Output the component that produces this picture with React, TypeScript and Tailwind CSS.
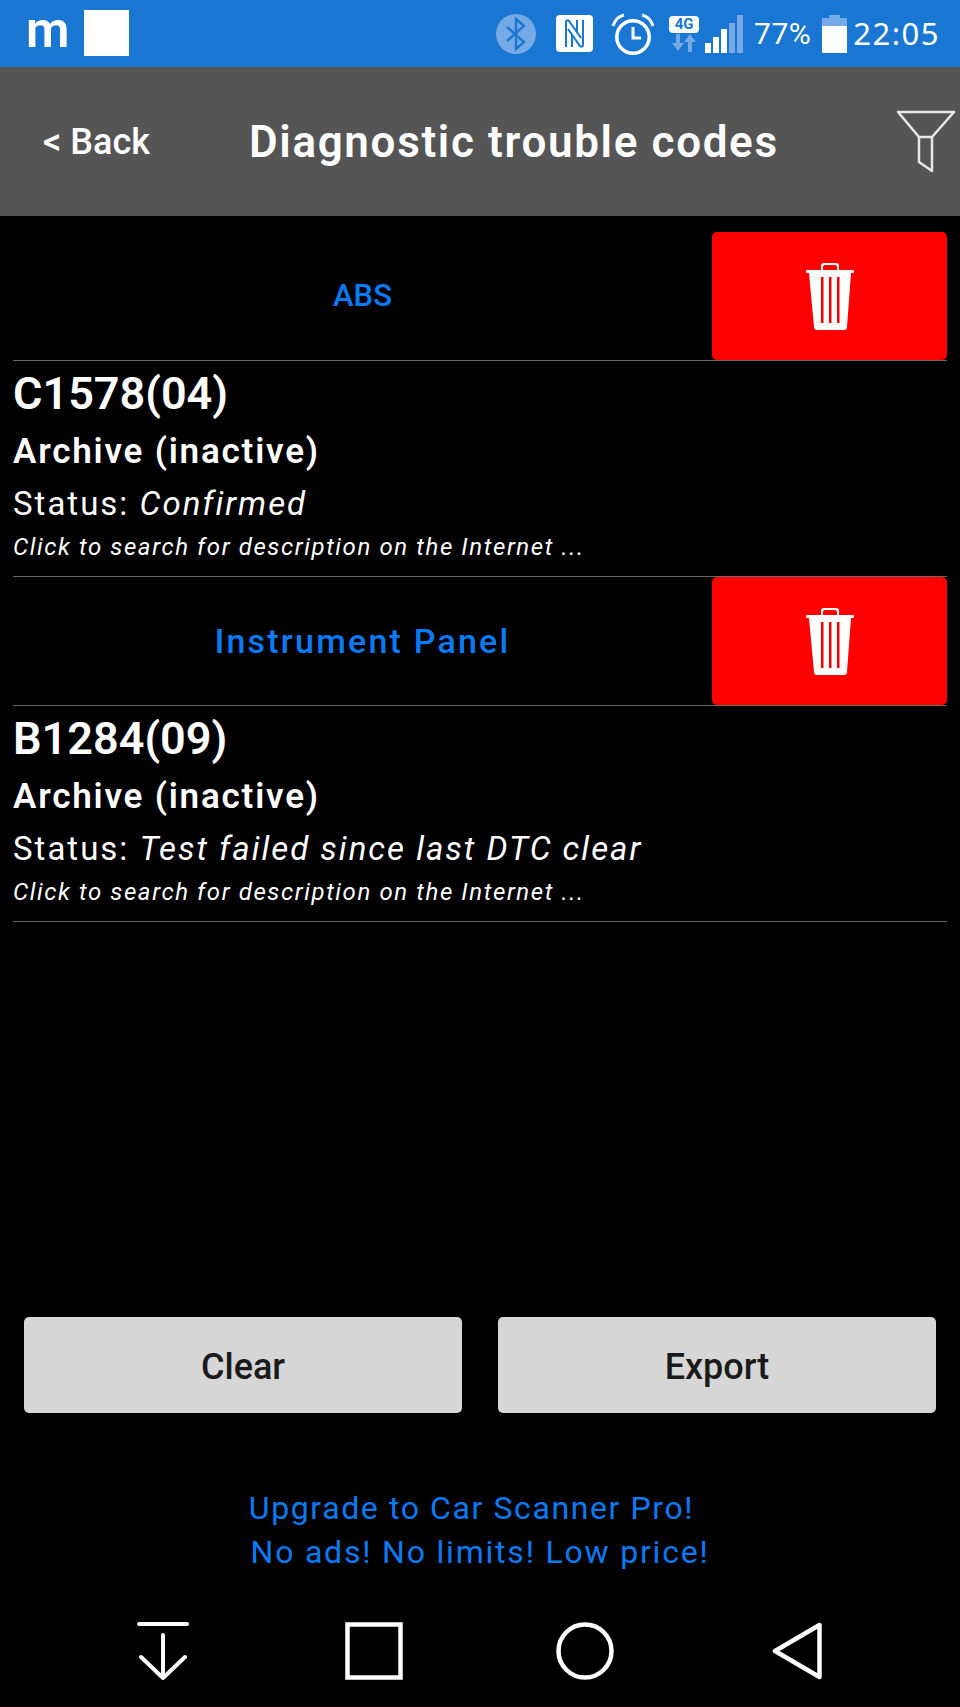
const display = "font-['Roboto',sans-serif]";

function Bluetooth() {
  return (
    <svg width="40" height="40" viewBox="0 0 40 40">
      <circle cx="20" cy="20" r="20" fill="#76aae6" />
      <path d="M11 13l17 15-8 7V5l8 7-17 15" fill="none" stroke="#1976d2" strokeWidth="2.4" />
    </svg>
  );
}

function Nfc() {
  return (
    <svg width="37" height="37" viewBox="0 0 37 37">
      <rect width="37" height="37" rx="4" fill="#fff" />
      <g fill="none" stroke="#1976d2" strokeWidth="2">
        <path d="M10 32V7c0-2 2-2 3-1l12 17" />
        <path d="M27 5v25c0 2-2 2-3 1L12 14" />
        <path d="M16 32V19M21 5v13" />
      </g>
    </svg>
  );
}

function Alarm() {
  return (
    <svg width="44" height="42" viewBox="0 0 44 42" fill="none" stroke="#fff">
      <circle cx="22" cy="24" r="16.2" strokeWidth="3.5" />
      <path d="M22 14v11h8" strokeWidth="3" />
      <path d="M2 13C4 7 8 3 13 2M42 13C40 7 36 3 31 2" strokeWidth="3" />
    </svg>
  );
}

function NetworkType() {
  return (
    <div className="flex flex-col items-center w-[30px] gap-px">
      <div className="w-[30px] h-[17px] bg-white rounded-sm flex items-center justify-center text-[15px] leading-none font-bold text-[#1976d2] font-['Roboto',sans-serif]">
        4G
      </div>
      <svg width="26" height="18" viewBox="0 0 26 18" fill="#76aae6">
        <path d="M5 0h4v9h4l-6 8-6-8h4zM21 18h-4V8h-4l6-8 6 8h-4z" />
      </svg>
    </div>
  );
}

function Signal() {
  return (
    <div className="flex items-end gap-[2px] h-[38px]">
      <div className="w-[6px] h-[10px] bg-white" />
      <div className="w-[6px] h-[16px] bg-white" />
      <div className="w-[6px] h-[24px] bg-white" />
      <div className="w-[6px] h-[30px] bg-[#76aae6]" />
      <div className="w-[6px] h-[38px] bg-[#76aae6]" />
    </div>
  );
}

function Battery() {
  return (
    <div className="flex flex-col items-center w-[25px]">
      <div className="w-[11px] h-[3px] bg-[#76aae6]" />
      <div className="w-[25px] h-[8px] bg-[#76aae6]" />
      <div className="w-[25px] h-[27px] bg-white" />
    </div>
  );
}

function Trash() {
  return (
    <svg width="48" height="67" viewBox="0 0 48 67" fill="#fff">
      <path d="M15 8V3c0-2 1-3 3-3h12c2 0 3 1 3 3v5h-2V4c0-1-1-2-2-2H19c-1 0-2 1-2 2v4z" />
      <rect x="0" y="7" width="48" height="3" rx="1" />
      <path
        d="M3 10h42l-4 54c0 2-1 3-3 3H11c-2 0-3-1-3-3zM15 14v46h2.5V14zM23 14v46h2.5V14zM31 14v46h2.5V14z"
        fillRule="evenodd"
      />
    </svg>
  );
}

function Filter() {
  return (
    <svg width="60" height="64" viewBox="0 0 60 64" fill="none" stroke="#e8e8e8" strokeWidth="2.5" strokeLinejoin="round">
      <path d="M2 2h56L36 27v34l-13-9V27z" />
      <path d="M23 27h13" />
    </svg>
  );
}

function SectionRow({ name, className }: { name: string; className: string }) {
  return (
    <div className="flex h-[129px] border-b border-[#6b6b6b]">
      <div className={`flex-1 flex items-center justify-center font-medium text-[#0a7bf5] ${display} ${className}`}>
        {name}
      </div>
      <button className="w-[235px] bg-[#ff0000] rounded-[5px] flex items-center justify-center">
        <Trash />
      </button>
    </div>
  );
}

function CodeRow({ code, status }: { code: string; status: string }) {
  return (
    <div className={`h-[216px] pt-[3px] border-b border-[#6b6b6b] text-white ${display}`}>
      <div className="text-[45px] leading-[60px] font-semibold">{code}</div>
      <div className="text-[35px] leading-[56px] font-semibold tracking-[1.8px]">Archive (inactive)</div>
      <div className="text-[33px] leading-[48px] tracking-[2px]">
        Status: <span className="italic">{status}</span>
      </div>
      <div className="text-[24px] leading-[38px] italic tracking-[1.6px]">Click to search for description on the Internet ...</div>
    </div>
  );
}

export default function App() {
  return (
    <div className="w-[960px] h-[1707px] bg-black flex flex-col overflow-hidden">
      {/* Status bar */}
      <div className="h-[67px] bg-[#1976d2] flex items-center pl-[26px] pr-[20px] text-white">
        <span className="text-[50px] leading-none font-semibold font-['Roboto',sans-serif] -mt-[8px]">m</span>
        <div className="w-[45px] h-[46px] bg-white ml-[15px] -mt-[1px]" />
        <div className="ml-auto flex items-center">
          <Bluetooth />
          <div className="ml-[20px]"><Nfc /></div>
          <div className="ml-[18px]"><Alarm /></div>
          <div className="ml-[14px]"><NetworkType /></div>
          <div className="ml-[6px]"><Signal /></div>
          <span className="ml-[11px] text-[30px] leading-none tracking-[0.5px] font-['Roboto',sans-serif]">77%</span>
          <div className="ml-[11px]"><Battery /></div>
          <span className="ml-[6px] text-[31px] leading-none tracking-[1.5px] font-['Noto_Sans',sans-serif]">22:05</span>
        </div>
      </div>

      {/* Header */}
      <div className="h-[149px] bg-[#555555] flex items-center text-white relative">
        <span className="ml-[43px] text-[36px] font-medium font-['Roboto',sans-serif]">&lt; Back</span>
        <span className={`absolute left-[249px] text-[44px] font-semibold tracking-[1.65px] ${display}`}>
          Diagnostic trouble codes
        </span>
        <div className="ml-auto mr-[4px]"><Filter /></div>
      </div>

      {/* Codes */}
      <div className="px-[13px] pt-[16px]">
        <SectionRow name="ABS" className="text-[31px]" />
        <CodeRow code="C1578(04)" status="Confirmed" />
        <SectionRow name="Instrument Panel" className="text-[34px] tracking-[2.2px]" />
        <CodeRow code="B1284(09)" status="Test failed since last DTC clear" />
      </div>

      {/* Bottom */}
      <div className="mt-auto">
        <div className="flex gap-[36px] px-[24px]">
          <button className="flex-1 h-[96px] pt-[3px] bg-[#d6d6d6] rounded-[5px] text-[36px] font-medium text-[#1a1a1a] font-['Roboto',sans-serif]">Clear</button>
          <button className="flex-1 h-[96px] pt-[3px] bg-[#d6d6d6] rounded-[5px] text-[36px] font-medium text-[#1a1a1a] font-['Roboto',sans-serif]">Export</button>
        </div>
        <div className={`mt-[73px] text-center text-[32px] leading-[44px] text-[#0a7bf5] ${display}`}>
          <div className="pr-[17px] tracking-[1.6px]">Upgrade to Car Scanner Pro!</div>
          <div className="tracking-[1.8px]">No ads! No limits! Low price!</div>
        </div>
        <div className="mt-[48px] h-[85px] flex items-start">
          <div className="ml-[137px]">
            <svg width="52" height="58" viewBox="0 0 52 58" fill="none" stroke="#fff" strokeLinecap="round" strokeLinejoin="round">
              <path d="M2 2h48" strokeWidth="4" />
              <path d="M26 13v43M4 35l22 21 22-21" strokeWidth="4" />
            </svg>
          </div>
          <div className="ml-[156px]">
            <svg width="58" height="58" viewBox="0 0 58 58" fill="none" stroke="#fff" strokeWidth="4.5">
              <rect x="2.5" y="2.5" width="53" height="53" />
            </svg>
          </div>
          <div className="ml-[153px]">
            <svg width="58" height="58" viewBox="0 0 58 58" fill="none" stroke="#fff" strokeWidth="4.5">
              <circle cx="29" cy="29" r="26.5" />
            </svg>
          </div>
          <div className="ml-[158px]">
            <svg width="50" height="58" viewBox="0 0 50 58" fill="none" stroke="#fff" strokeWidth="4.5" strokeLinejoin="round">
              <path d="M47.5 3v52L3 29z" />
            </svg>
          </div>
        </div>
      </div>
    </div>
  );
}
